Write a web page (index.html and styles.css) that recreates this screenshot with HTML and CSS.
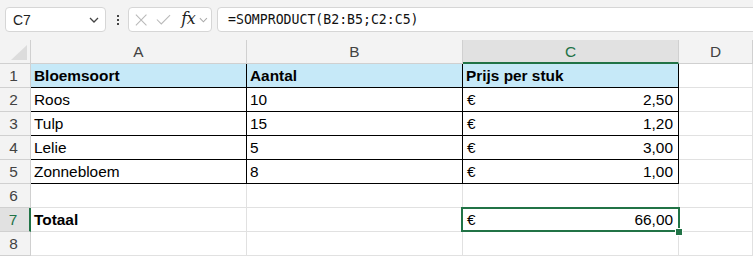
FILE: index.html
```html
<!DOCTYPE html>
<html>
	<head>
		<meta charset="utf-8">
		<title>Bloemen</title>
		<link rel="stylesheet" href="styles.css">
	</head>
	<body>
		<div class="toolbar">
			<div class="namebox">
				<span>C7</span>
				<svg width="10" height="6" viewBox="0 0 10 6"><path d="M1 1l4 4 4-4" fill="none" stroke="#444" stroke-width="1.3"/></svg>
			</div>
			<div class="more"><i></i><i></i><i></i></div>
			<div class="fxbtns">
				<svg class="ic" width="14" height="14" viewBox="0 0 14 14"><path d="M1 1l12 12M13 1L1 13" fill="none" stroke="#b9b9b9" stroke-width="1.2"/></svg>
				<svg class="ic" width="17" height="11" viewBox="0 0 17 11"><path d="M1 5.5l5 5L16 0.5" fill="none" stroke="#b9b9b9" stroke-width="1.2"/></svg>
				<span class="fx">fx</span>
				<svg width="10" height="6" viewBox="0 0 10 6"><path d="M1 1l4 4 4-4" fill="none" stroke="#aaa" stroke-width="1.2"/></svg>
			</div>
			<div class="formula">=SOMPRODUCT(B2:B5;C2:C5)</div>
		</div>

		<div class="sheet">
			<div class="corner"></div>
			<div class="hdr">A</div>
			<div class="hdr">B</div>
			<div class="hdr sel">C</div>
			<div class="hdr">D</div>

			<div class="rh">1</div>
			<div class="c b head">Bloemsoort</div>
			<div class="c b head">Aantal</div>
			<div class="c b head">Prijs per stuk</div>
			<div class="c"></div>

			<div class="rh">2</div>
			<div class="c b">Roos</div>
			<div class="c b">10</div>
			<div class="c b eur"><span>€</span><span>2,50</span></div>
			<div class="c"></div>

			<div class="rh">3</div>
			<div class="c b">Tulp</div>
			<div class="c b">15</div>
			<div class="c b eur"><span>€</span><span>1,20</span></div>
			<div class="c"></div>

			<div class="rh">4</div>
			<div class="c b">Lelie</div>
			<div class="c b">5</div>
			<div class="c b eur"><span>€</span><span>3,00</span></div>
			<div class="c"></div>

			<div class="rh">5</div>
			<div class="c b">Zonnebloem</div>
			<div class="c b">8</div>
			<div class="c b eur"><span>€</span><span>1,00</span></div>
			<div class="c"></div>

			<div class="rh">6</div>
			<div class="c"></div>
			<div class="c"></div>
			<div class="c"></div>
			<div class="c"></div>

			<div class="rh sel">7</div>
			<div class="c bold">Totaal</div>
			<div class="c"></div>
			<div class="c eur active"><span>€</span><span>66,00</span></div>
			<div class="c"></div>

			<div class="rh">8</div>
			<div class="c"></div>
			<div class="c"></div>
			<div class="c"></div>
			<div class="c"></div>
		</div>
	</body>
</html>
```

FILE: styles.css
```css
* {
	margin: 0;
	padding: 0;
	box-sizing: border-box;
}

body {
	background: #f3f3f3;
	font-family: "Liberation Sans", Arial, sans-serif;
	color: #000;
	overflow: hidden;
}

/* formula bar */
.toolbar {
	display: flex;
	align-items: center;
	height: 40px;
	padding: 7px 0 8px 5px;
}

.namebox {
	display: flex;
	align-items: center;
	justify-content: space-between;
	width: 101px;
	height: 25px;
	padding: 0 6px 0 7px;
	background: #fff;
	border: 1px solid #d6d6d6;
	border-radius: 4px;
	font-size: 14px;
	color: #222;
}

.more {
	display: flex;
	flex-direction: column;
	gap: 2px;
	margin: 0 9px 0 11px;
}

.more i {
	display: block;
	width: 2px;
	height: 2px;
	background: #444;
}

.fxbtns {
	display: flex;
	align-items: center;
	width: 84px;
	height: 25px;
	padding: 0 3px 0 6px;
	background: #fff;
	border: 1px solid #d6d6d6;
	border-radius: 4px;
}

.fxbtns .ic {
	margin-right: 9px;
}

.fx {
	font-family: "DejaVu Serif", "Liberation Serif", serif;
	font-style: italic;
	font-size: 16px;
	color: #222;
	margin: -3px 4px 0 1px;
	letter-spacing: -0.5px;
}

.formula {
	flex: 1;
	height: 25px;
	margin-left: 5px;
	margin-right: -6px;
	padding-left: 10px;
	background: #fff;
	border: 1px solid #d6d6d6;
	border-radius: 4px;
	font-family: "DejaVu Sans Mono", monospace;
	font-size: 13.2px;
	line-height: 23px;
	color: #111;
}

/* grid */
.sheet {
	display: grid;
	grid-template-columns: 31px 216px 216px 216px 1fr;
	grid-auto-rows: 24px;
	background: #fff;
	font-size: 15.4px;
}

.corner,
.hdr,
.rh {
	background: #f3f3f3;
	color: #424242;
	border-right: 1px solid #d0d0d0;
	border-bottom: 1px solid #d0d0d0;
	text-align: center;
	line-height: 23px;
}

.corner {
	position: relative;
}

.corner::after {
	content: "";
	position: absolute;
	right: 3px;
	bottom: 3px;
	border-style: solid;
	border-width: 0 0 15px 16px;
	border-color: transparent transparent #dcdcdc transparent;
}

.hdr.sel {
	background: #e1e1e1;
	color: #217346;
	border-bottom: 2px solid #217346;
}

.rh.sel {
	background: #e1e1e1;
	color: #217346;
	border-right: 2px solid #217346;
}

.rh {
	padding-right: 3px;
}

.c {
	border-right: 1px solid #e1e1e1;
	border-bottom: 1px solid #e1e1e1;
	padding: 0 4px 0 3px;
	line-height: 23px;
	white-space: nowrap;
	overflow: hidden;
}

.c.b {
	border-right-color: #000;
	border-bottom-color: #000;
}

.head {
	background: #c6e9f8;
	font-weight: bold;
}

.bold {
	font-weight: bold;
}

.eur {
	display: flex;
	justify-content: space-between;
	padding: 0 5px 0 4px;
}

.c.active {
	position: relative;
	overflow: visible;
}

.c.active::before {
	content: "";
	position: absolute;
	left: -2px;
	top: -1px;
	right: -2px;
	bottom: -1px;
	border: 2px solid #217346;
}

.c.active::after {
	content: "";
	position: absolute;
	right: -5px;
	bottom: -5px;
	width: 6px;
	height: 6px;
	background: #217346;
	border: 1px solid #fff;
	box-sizing: content-box;
}
```
